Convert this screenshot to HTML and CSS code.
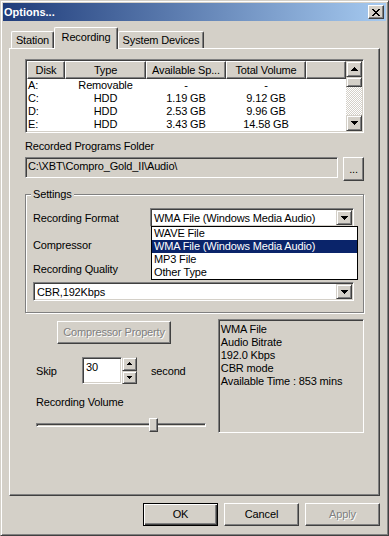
FILE: index.html
```html
<!DOCTYPE html>
<html lang="en">
<head>
    <meta charset="UTF-8">
    <title>Options...</title>
    <link rel="stylesheet" href="styles.css">
</head>
<body>
    <div class="window">
        <div class="titlebar">
            <span class="title">Options...</span>
            <div class="close">
                <svg width="8" height="7" viewBox="0 0 8 7"><path d="M0 0h2v1H0zM6 0h2v1H6zM1 1h2v1H1zM5 1h2v1H5zM2 2h4v1H2zM3 3h2v1H3zM2 4h4v1H2zM1 5h2v1H1zM5 5h2v1H5zM0 6h2v1H0zM6 6h2v1H6z"/></svg>
            </div>
        </div>

        <div class="tabs">
            <div class="tab tab-station">Station</div>
            <div class="tab tab-active">Recording</div>
            <div class="tab tab-system">System Devices</div>
        </div>

        <div class="panel">
            <div class="listview">
                <div class="lv-main">
                    <div class="lv-row lv-head">
                        <div class="hd">Disk</div>
                        <div class="hd">Type</div>
                        <div class="hd">Available Sp...</div>
                        <div class="hd">Total Volume</div>
                        <div class="hd"></div>
                    </div>
                    <div class="lv-row">
                        <div class="cell left">A:</div><div class="cell">Removable</div><div class="cell">-</div><div class="cell">-</div>
                    </div>
                    <div class="lv-row">
                        <div class="cell left">C:</div><div class="cell">HDD</div><div class="cell">1.19 GB</div><div class="cell">9.12 GB</div>
                    </div>
                    <div class="lv-row">
                        <div class="cell left">D:</div><div class="cell">HDD</div><div class="cell">2.53 GB</div><div class="cell">9.96 GB</div>
                    </div>
                    <div class="lv-row">
                        <div class="cell left">E:</div><div class="cell">HDD</div><div class="cell">3.43 GB</div><div class="cell">14.58 GB</div>
                    </div>
                </div>
                <div class="vscroll">
                    <div class="sb-btn"><svg width="7" height="4" viewBox="0 0 7 4"><path d="M3 0h1v1H3zM2 1h3v1H2zM1 2h5v1H1zM0 3h7v1H0z"/></svg></div>
                    <div class="sb-thumb"></div>
                    <div class="sb-track"></div>
                    <div class="sb-btn"><svg width="7" height="4" viewBox="0 0 7 4"><path d="M0 0h7v1H0zM1 1h5v1H1zM2 2h3v1H2zM3 3h1v1H3z"/></svg></div>
                </div>
            </div>

            <div class="label folder-label">Recorded Programs Folder</div>
            <div class="folder-row">
                <div class="field folder">C:\XBT\Compro_Gold_II\Audio\</div>
                <div class="btn browse">...</div>
            </div>

            <fieldset class="settings">
                <legend>Settings</legend>
                <div class="set-row">
                    <div class="set-label">Recording Format</div>
                    <div class="combo format">
                        <span class="combo-text">WMA File (Windows Media Audio)</span>
                        <div class="combo-btn"><svg width="7" height="4" viewBox="0 0 7 4"><path d="M0 0h7v1H0zM1 1h5v1H1zM2 2h3v1H2zM3 3h1v1H3z"/></svg></div>
                        <div class="popup">
                            <div class="item">WAVE File</div>
                            <div class="item selected">WMA File (Windows Media Audio)</div>
                            <div class="item">MP3 File</div>
                            <div class="item">Other Type</div>
                        </div>
                    </div>
                </div>
                <div class="label compressor-label">Compressor</div>
                <div class="label quality-label">Recording Quality</div>
                <div class="combo quality">
                    <span class="combo-text">CBR,192Kbps</span>
                    <div class="combo-btn"><svg width="7" height="4" viewBox="0 0 7 4"><path d="M0 0h7v1H0zM1 1h5v1H1zM2 2h3v1H2zM3 3h1v1H3z"/></svg></div>
                </div>
            </fieldset>

            <div class="lower">
                <div class="lower-left">
                    <div class="btn disabled prop-btn">Compressor Property</div>
                    <div class="skip-row">
                        <span class="skip-label">Skip</span>
                        <div class="spin-field">30</div>
                        <div class="spin-btns">
                            <div class="spin-btn"><svg width="5" height="3" viewBox="0 0 5 3"><path d="M2 0h1v1H2zM1 1h3v1H1zM0 2h5v1H0z"/></svg></div>
                            <div class="spin-btn"><svg width="5" height="3" viewBox="0 0 5 3"><path d="M0 0h5v1H0zM1 1h3v1H1zM2 2h1v1H2z"/></svg></div>
                        </div>
                        <span class="second">second</span>
                    </div>
                    <div class="label volume-label">Recording Volume</div>
                    <div class="slider">
                        <div class="slider-track"></div>
                        <div class="slider-thumb"></div>
                    </div>
                </div>
                <div class="info">
                    <div>WMA File</div>
                    <div>Audio Bitrate</div>
                    <div>192.0 Kbps</div>
                    <div>CBR mode</div>
                    <div>Available Time : 853 mins</div>
                </div>
            </div>
        </div>

        <div class="footer">
            <div class="btn btn-default">OK</div>
            <div class="btn">Cancel</div>
            <div class="btn disabled">Apply</div>
        </div>
    </div>
</body>
</html>
```

FILE: styles.css
```css
* {
    box-sizing: border-box;
}
body {
    margin: 0;
    font-family: "Liberation Sans", Arial, sans-serif;
    font-size: 11px;
    letter-spacing: -0.15px;
    color: #000;
    background: #d4d0c8;
}
.window {
    width: 389px;
    height: 536px;
    background: #d4d0c8;
    border: 1px solid;
    border-color: #d4d0c8 #404040 #404040 #d4d0c8;
    box-shadow: inset 1px 1px #fff, inset -1px -1px #808080;
    padding: 2px;
    display: flex;
    flex-direction: column;
}

/* title bar */
.titlebar {
    height: 18px;
    display: flex;
    align-items: center;
    justify-content: space-between;
    padding: 0 2px 0 1px;
    background: linear-gradient(to right, #1f3c7a, #a6caf0);
}
.title {
    color: #fff;
    font-weight: bold;
    font-size: 11px;
    letter-spacing: 0;
}
.close {
    width: 16px;
    height: 14px;
    display: flex;
    align-items: center;
    justify-content: center;
    background: #d4d0c8;
    border: 1px solid;
    border-color: #fff #404040 #404040 #fff;
    box-shadow: inset -1px -1px #808080;
}

/* tabs */
.tabs {
    margin-top: 6px;
    height: 21px;
    display: flex;
    align-items: flex-end;
    padding-left: 8px;
}
.tab {
    height: 17px;
    line-height: 16px;
    text-align: center;
    border: 1px solid;
    border-bottom: none;
    border-color: #fff #404040 #fff #fff;
    box-shadow: inset -1px 0 #808080;
    border-radius: 2px 2px 0 0;
    background: #d4d0c8;
}
.tab-station {
    width: 43px;
}
.tab-active {
    width: 64px;
    height: 22px;
    line-height: 19px;
    margin-bottom: -1px;
    position: relative;
    z-index: 1;
}
.tab-system {
    width: 86px;
}

/* panel */
.panel {
    margin-left: 6px;
    width: 371px;
    height: 448px;
    border: 1px solid;
    border-color: #fff #404040 #404040 #fff;
    box-shadow: inset -1px -1px #808080;
    padding: 10px 15px 0 15px;
}
.label {
    height: 13px;
    line-height: 13px;
    white-space: nowrap;
}

/* list view */
.listview {
    height: 74px;
    display: flex;
    background: #fff;
    border: 1px solid;
    border-color: #808080 #fff #fff #808080;
    box-shadow: inset 1px 1px #404040, inset -1px -1px #d4d0c8;
    padding: 1px;
}
.lv-main {
    flex: 1;
    overflow: hidden;
}
.lv-row {
    display: grid;
    grid-template-columns: 38px 81px 80px 80px 1fr;
    height: 13px;
    line-height: 13px;
}
.lv-head {
    height: 18px;
}
.hd {
    background: #d4d0c8;
    border: 1px solid;
    border-color: #fff #404040 #404040 #fff;
    box-shadow: inset -1px -1px #808080;
    text-align: center;
    line-height: 16px;
    white-space: nowrap;
    overflow: hidden;
}
.cell {
    text-align: center;
    white-space: nowrap;
}
.cell.left {
    text-align: left;
    padding-left: 1px;
}
.vscroll {
    width: 16px;
    display: flex;
    flex-direction: column;
}
.sb-btn, .sb-thumb {
    height: 16px;
    display: flex;
    align-items: center;
    justify-content: center;
    background: #d4d0c8;
    border: 1px solid;
    border-color: #d4d0c8 #404040 #404040 #d4d0c8;
    box-shadow: inset 1px 1px #fff, inset -1px -1px #808080;
}
.sb-thumb {
    height: 10px;
}
.sb-track {
    flex: 1;
    background: repeating-conic-gradient(#fff 0 25%, #d4d0c8 0 50%) 0 0 / 2px 2px;
}

/* folder */
.folder-label {
    margin-top: 7px;
}
.folder-row {
    margin-top: 4px;
    display: flex;
    gap: 5px;
    height: 24px;
}
.field {
    border: 1px solid;
    border-color: #808080 #fff #fff #808080;
    box-shadow: inset 1px 1px #404040, inset -1px -1px #d4d0c8;
}
.folder {
    flex: 1;
    height: 21px;
    line-height: 17px;
    padding-left: 2px;
    white-space: nowrap;
}
.btn {
    background: #d4d0c8;
    border: 1px solid;
    border-color: #fff #404040 #404040 #fff;
    box-shadow: inset -1px -1px #808080;
    text-align: center;
    white-space: nowrap;
}
.browse {
    width: 21px;
    height: 24px;
    line-height: 22px;
}
.disabled {
    color: #808080;
    text-shadow: 1px 1px #fff;
}

/* settings group */
.settings {
    position: relative;
    margin: 7px 0 0;
    padding: 7px 9px 11px 7px;
    border: 1px solid #808080;
    box-shadow: inset 1px 1px #fff, 1px 1px #fff;
}
.settings legend {
    padding: 0 2px;
    margin-left: -2px;
    line-height: 13px;
    background: #d4d0c8;
}
.set-row {
    display: flex;
    align-items: center;
    height: 19px;
}
.set-label {
    width: 117px;
}
.combo {
    position: relative;
    height: 19px;
    display: flex;
    align-items: center;
    background: #fff;
    border: 1px solid;
    border-color: #808080 #fff #fff #808080;
    box-shadow: inset 1px 1px #404040, inset -1px -1px #d4d0c8;
    padding: 1px;
}
.combo-text {
    flex: 1;
    padding-left: 2px;
    white-space: nowrap;
}
.combo-btn {
    width: 16px;
    height: 15px;
    display: flex;
    align-items: center;
    justify-content: center;
    background: #d4d0c8;
    border: 1px solid;
    border-color: #d4d0c8 #404040 #404040 #d4d0c8;
    box-shadow: inset 1px 1px #fff, inset -1px -1px #808080;
}
.format {
    width: 204px;
}
.popup {
    position: absolute;
    top: 100%;
    left: 0;
    width: 207px;
    background: #fff;
    border: 1px solid #000;
    z-index: 2;
}
.item {
    height: 13px;
    line-height: 13px;
    padding-left: 2px;
    white-space: nowrap;
}
.item.selected {
    background: #0a246a;
    color: #fff;
}
.compressor-label {
    margin-top: 12px;
}
.quality-label {
    margin-top: 11px;
}
.quality {
    margin-top: 6px;
    width: 321px;
}

/* lower area */
.lower {
    margin-top: 6px;
    display: flex;
}
.lower-left {
    width: 194px;
}
.prop-btn {
    margin: 2px 0 0 32px;
    width: 114px;
    height: 23px;
    line-height: 21px;
}
.skip-row {
    margin-top: 13px;
    height: 27px;
    display: flex;
    align-items: center;
    padding-left: 11px;
}
.skip-label {
    width: 46px;
}
.spin-field {
    width: 40px;
    height: 27px;
    background: #fff;
    padding: 3px 0 0 3px;
    line-height: 13px;
    border: 1px solid;
    border-color: #808080 #fff #fff #808080;
    box-shadow: inset 1px 1px #404040, inset -1px -1px #d4d0c8;
}
.spin-btns {
    width: 15px;
    height: 27px;
    display: flex;
    flex-direction: column;
}
.spin-btn {
    flex: 1;
    display: flex;
    align-items: center;
    justify-content: center;
    background: #d4d0c8;
    border: 1px solid;
    border-color: #d4d0c8 #404040 #404040 #d4d0c8;
    box-shadow: inset 1px 1px #fff, inset -1px -1px #808080;
}
.second {
    margin-left: 14px;
}
.volume-label {
    margin: 12px 0 0 11px;
}
.slider {
    position: relative;
    margin: 9px 0 0 11px;
    width: 170px;
    height: 14px;
    display: flex;
    align-items: center;
}
.slider-track {
    width: 100%;
    height: 4px;
    border: 1px solid;
    border-color: #808080 #fff #fff #808080;
    box-shadow: inset 1px 1px #404040;
}
.slider-thumb {
    position: absolute;
    left: 113px;
    top: 0;
    width: 9px;
    height: 14px;
    background: #d4d0c8;
    border: 1px solid;
    border-color: #fff #404040 #404040 #fff;
    box-shadow: inset -1px -1px #808080;
}
.info {
    width: 147px;
    height: 114px;
    border: 1px solid;
    border-color: #808080 #fff #fff #808080;
    box-shadow: inset 1px 1px #404040, inset -1px -1px #d4d0c8;
    padding: 3px 2px;
    line-height: 13px;
    white-space: nowrap;
}

/* footer */
.footer {
    margin-top: 7px;
    display: flex;
    justify-content: flex-end;
    gap: 6px;
    padding-right: 6px;
}
.footer .btn {
    width: 75px;
    height: 23px;
    line-height: 21px;
}
.footer .btn-default {
    border: 1px solid #000;
    box-shadow: inset 1px 1px #fff, inset -1px -1px #404040, inset -2px -2px #808080;
}
```
